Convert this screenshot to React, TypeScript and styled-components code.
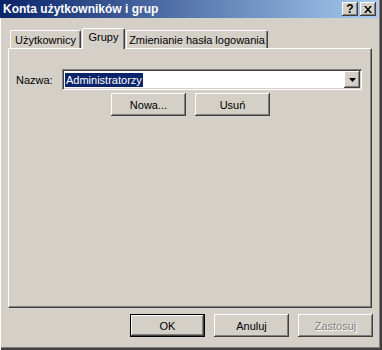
import styled, { createGlobalStyle } from "styled-components";

const GlobalStyle = createGlobalStyle`
  html, body {
    margin: 0;
    padding: 0;
    background: #d4d0c8;
  }
  body {
    font-family: "Liberation Sans", Arial, sans-serif;
    font-size: 11px;
    color: #000;
  }
`;

const raised = `
  box-shadow: inset -1px -1px #404040, inset 1px 1px #ffffff,
    inset -2px -2px #808080, inset 2px 2px #d4d0c8;
`;

const Window = styled.div`
  width: 382px;
  height: 350px;
  box-sizing: border-box;
  background: #d4d0c8;
  display: flex;
  flex-direction: column;
  box-shadow: inset 1px 0 #ffffff, inset -1px -1px #404040,
    inset -2px -2px #404040, inset -3px -3px #808080;
`;

const TitleBar = styled.div`
  height: 18px;
  margin-right: 4px;
  padding: 0 2px 0 3px;
  display: flex;
  align-items: center;
  background: linear-gradient(to right, #0a246a, #a6caf0);
`;

const TitleText = styled.span`
  flex: 1;
  color: #fff;
  font-weight: bold;
  font-size: 12px;
  white-space: nowrap;
`;

const CaptionButtons = styled.div`
  display: flex;
  gap: 2px;
`;

const CaptionButton = styled.div`
  width: 16px;
  height: 14px;
  box-sizing: border-box;
  background: #d4d0c8;
  ${raised}
  display: flex;
  align-items: center;
  justify-content: center;
  font-weight: bold;
  font-size: 12px;
  line-height: 14px;
`;

const Body = styled.div`
  flex: 1;
  padding: 10px 10px 0 8px;
  display: flex;
  flex-direction: column;
`;

const TabStrip = styled.div`
  height: 20px;
  padding-left: 2px;
  display: flex;
  align-items: flex-end;
  position: relative;
  z-index: 1;
`;

const Tab = styled.div<{ $active?: boolean; $w: number; $gap?: number }>`
  width: ${(p) => p.$w}px;
  height: ${(p) => (p.$active ? 21 : 18)}px;
  margin-left: ${(p) => p.$gap ?? 0}px;
  margin-bottom: ${(p) => (p.$active ? -1 : 0)}px;
  box-sizing: border-box;
  background: #d4d0c8;
  border-top: 1px solid #fff;
  border-left: 1px solid #fff;
  border-right: 1px solid #404040;
  border-radius: 2px 2px 0 0;
  box-shadow: inset -1px 0 #808080;
  display: flex;
  justify-content: center;
  padding-top: ${(p) => (p.$active ? 2 : 3)}px;
  white-space: nowrap;
`;

const Panel = styled.div`
  height: 260px;
  box-sizing: border-box;
  border-top: 1px solid #fff;
  border-left: 1px solid #fff;
  border-right: 1px solid #404040;
  border-bottom: 1px solid #404040;
  box-shadow: inset -1px -1px #808080;
  padding: 20px 9px 0 7px;
`;

const NameRow = styled.div`
  display: flex;
  align-items: center;
  height: 21px;
`;

const Label = styled.label`
  width: 46px;
`;

const Combo = styled.div`
  flex: 1;
  height: 21px;
  box-sizing: border-box;
  padding: 2px;
  background: #fff;
  display: flex;
  align-items: center;
  box-shadow: inset 1px 1px #808080, inset -1px -1px #ffffff,
    inset 2px 2px #404040, inset -2px -2px #d4d0c8;
`;

const ComboValue = styled.div`
  flex: 1;
  display: flex;
  align-items: center;
  padding-left: 1px;
`;

const Selected = styled.span`
  background: #0a246a;
  color: #fff;
  height: 14px;
  line-height: 14px;
  padding: 0 1px;
`;

const DropButton = styled.div`
  width: 16px;
  height: 17px;
  box-sizing: border-box;
  background: #d4d0c8;
  ${raised}
  display: flex;
  align-items: center;
  justify-content: center;
`;

const ButtonRow = styled.div<{ $end?: boolean }>`
  display: flex;
  gap: 9px;
  justify-content: ${(p) => (p.$end ? "flex-end" : "center")};
`;

const ActionRow = styled(ButtonRow)`
  margin-top: 3px;
  padding-left: 3px;
`;

const Footer = styled(ButtonRow)`
  margin-top: 6px;
  margin-right: -1px;
`;

const Button = styled.button<{ $default?: boolean }>`
  width: 75px;
  height: 23px;
  box-sizing: border-box;
  padding: 0;
  font-family: "Liberation Sans", Arial, sans-serif;
  font-size: 11px;
  color: #000;
  background: #d4d0c8;
  border: ${(p) => (p.$default ? "1px solid #000" : "none")};
  ${raised}

  &:disabled {
    color: #808080;
    text-shadow: 1px 1px #fff;
  }
`;

export default function App() {
  return (
    <>
      <GlobalStyle />
      <Window>
        <TitleBar>
          <TitleText>Konta użytkowników i grup</TitleText>
          <CaptionButtons>
            <CaptionButton>?</CaptionButton>
            <CaptionButton>
              <svg width="8" height="7" viewBox="0 0 8 7">
                <path d="M0 0h2l2 2.5L6 0h2L5 3.5 8 7H6L4 4.5 2 7H0l3-3.5z" fill="#000" />
              </svg>
            </CaptionButton>
          </CaptionButtons>
        </TitleBar>
        <Body>
          <TabStrip>
            <Tab $w={71}>Użytkownicy</Tab>
            <Tab $w={43} $gap={1} $active>
              Grupy
            </Tab>
            <Tab $w={142} $gap={1}>
              Zmienianie hasła logowania
            </Tab>
          </TabStrip>
          <Panel>
            <NameRow>
              <Label>Nazwa:</Label>
              <Combo>
                <ComboValue>
                  <Selected>Administratorzy</Selected>
                </ComboValue>
                <DropButton>
                  <svg width="7" height="4" viewBox="0 0 7 4">
                    <path d="M0 0h7L3.5 4z" fill="#000" />
                  </svg>
                </DropButton>
              </Combo>
            </NameRow>
            <ActionRow>
              <Button>Nowa...</Button>
              <Button>Usuń</Button>
            </ActionRow>
          </Panel>
          <Footer $end>
            <Button $default>OK</Button>
            <Button>Anuluj</Button>
            <Button disabled>Zastosuj</Button>
          </Footer>
        </Body>
      </Window>
    </>
  );
}
